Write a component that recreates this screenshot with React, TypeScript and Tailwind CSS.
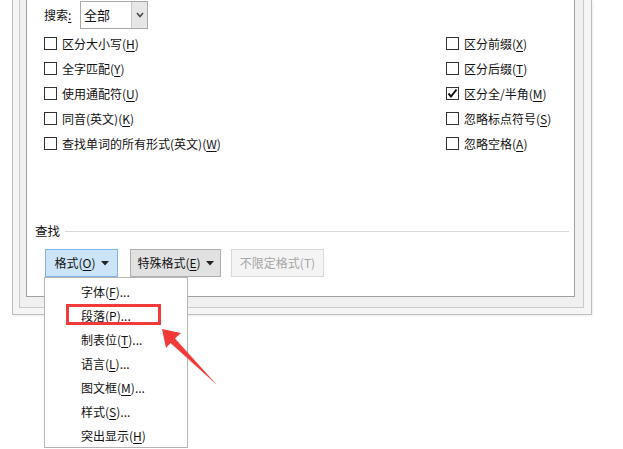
const leftOptions = [
  { label: '区分大小写', key: 'H' },
  { label: '全字匹配', key: 'Y' },
  { label: '使用通配符', key: 'U' },
  { label: '同音(英文)', key: 'K' },
  { label: '查找单词的所有形式(英文)', key: 'W' },
];

const rightOptions = [
  { label: '区分前缀', key: 'X', checked: false },
  { label: '区分后缀', key: 'T', checked: false },
  { label: '区分全/半角', key: 'M', checked: true },
  { label: '忽略标点符号', key: 'S', checked: false },
  { label: '忽略空格', key: 'A', checked: false },
];

const menuItems = [
  { label: '字体', key: 'F', dots: true },
  { label: '段落', key: 'P', dots: true },
  { label: '制表位', key: 'T', dots: true },
  { label: '语言', key: 'L', dots: true },
  { label: '图文框', key: 'M', dots: true },
  { label: '样式', key: 'S', dots: true },
  { label: '突出显示', key: 'H', dots: false },
];

const Acc = ({ k }: { k: string }) => (
  <span className="underline underline-offset-[2px] decoration-[1px]">{k}</span>
);

const CheckRow = ({ label, k, checked }: { label: string; k: string; checked?: boolean }) => (
  <div className="flex h-[25px] items-center gap-[5px]">
    <span className="flex h-[13px] w-[13px] items-center justify-center border border-[#333333] bg-white">
      {checked && (
        <svg width="11" height="11" viewBox="0 0 11 11">
          <path d="M1.5 5.5 L4 8.5 L9.5 1.5" fill="none" stroke="#111" strokeWidth="2" />
        </svg>
      )}
    </span>
    <span>
      {label}(<Acc k={k} />)
    </span>
  </div>
);

const Caret = ({ color = '#222' }: { color?: string }) => (
  <svg width="8" height="5" viewBox="0 0 8 5" className="ml-[5px]">
    <path d="M0 0 H8 L4 4.5 Z" fill={color} />
  </svg>
);

export default function App() {
  return (
    <div className="relative h-[449px] w-[623px] overflow-hidden bg-white font-['Noto_Sans_CJK_SC','Microsoft_YaHei',sans-serif] text-[12px] leading-[16px] text-[#111]">
      {/* dialog frame */}
      <div className="ml-[12px] w-[580px] border-x border-b border-[#bdbdbd] bg-[#f5f5f5] pb-[6px] pl-[6px] pr-[7px] shadow-[1px_1px_2px_rgba(0,0,0,0.08)]">
        <div className="border-x border-b border-[#cacaca] bg-[#f0f0f0] pb-[10px] pl-[6px] pr-[8px]">
          <div className="h-[297px] border-x border-b border-[#a0a0a0] bg-white pl-[17px] pr-[5px]">
            {/* search select */}
            <div className="flex items-center pt-[1px]">
              <span className="w-[36px]">
                搜索<span className="underline underline-offset-[2px]">:</span>
              </span>
              <div className="flex h-[28px] w-[68px] items-stretch border border-[#a9a9a9] bg-white">
                <span className="flex flex-1 items-center pl-[3px] text-[13px]">全部</span>
                <span className="flex w-[16px] items-center justify-center border-l border-[#c8c8c8] bg-[#e6e6e6]">
                  <svg width="8" height="6" viewBox="0 0 8 6">
                    <path d="M1 1 L4 4.5 L7 1" fill="none" stroke="#444" strokeWidth="1.5" />
                  </svg>
                </span>
              </div>
            </div>

            {/* options */}
            <div className="mt-[2px] flex">
              <div className="w-[402px]">
                {leftOptions.map((o) => (
                  <CheckRow key={o.key} label={o.label} k={o.key} />
                ))}
              </div>
              <div>
                {rightOptions.map((o) => (
                  <CheckRow key={o.key} label={o.label} k={o.key} checked={o.checked} />
                ))}
              </div>
            </div>

            {/* find section */}
            <div className="mt-[67px] flex items-center -ml-[9px]">
              <span className="text-[12.5px]">查找</span>
              <span className="ml-[5px] h-px flex-1 bg-[#d7d7d7]" />
            </div>

            <div className="mt-[10px] flex items-center">
              <div className="relative ml-[1px]">
                <button className="flex h-[28px] w-[73px] items-center justify-center border border-[#7eb4ea] bg-[#cce4f7]">
                  格式(<Acc k="O" />)
                  <Caret />
                </button>

                {/* dropdown menu */}
                <div className="absolute left-[-1px] top-full z-10 h-[171px] w-[144px] border border-[#b5b5b5] bg-white pt-[2px]">
                  {menuItems.map((m) => (
                    <div key={m.key + m.label} className="flex h-[24px] items-center pl-[36px]">
                      {m.label}(<Acc k={m.key} />){m.dots ? '...' : ''}
                    </div>
                  ))}
                  <div className="absolute left-[21px] top-[26px] h-[21px] w-[95px] border-[3px] border-[#f23a3a]" />
                </div>
              </div>

              <button className="ml-[12px] flex h-[28px] w-[91px] items-center justify-center border border-[#adadad] bg-[#e1e1e1]">
                特殊格式(<Acc k="E" />)
                <Caret />
              </button>
              <button className="ml-[10px] flex h-[28px] w-[93px] items-center justify-center border border-[#d9d9d9] bg-[#f4f4f4] text-[#a6a6a6]">
                不限定格式(T)
              </button>
            </div>
          </div>
        </div>
      </div>

      {/* red arrow annotation */}
      <svg className="absolute left-[150px] top-[320px] z-20" width="80" height="75" viewBox="150 320 80 75">
        <polygon
          points="162,329 181,333 175,338.5 217,385 170.5,343 166,348"
          fill="#f23a3a"
        />
      </svg>
    </div>
  );
}
